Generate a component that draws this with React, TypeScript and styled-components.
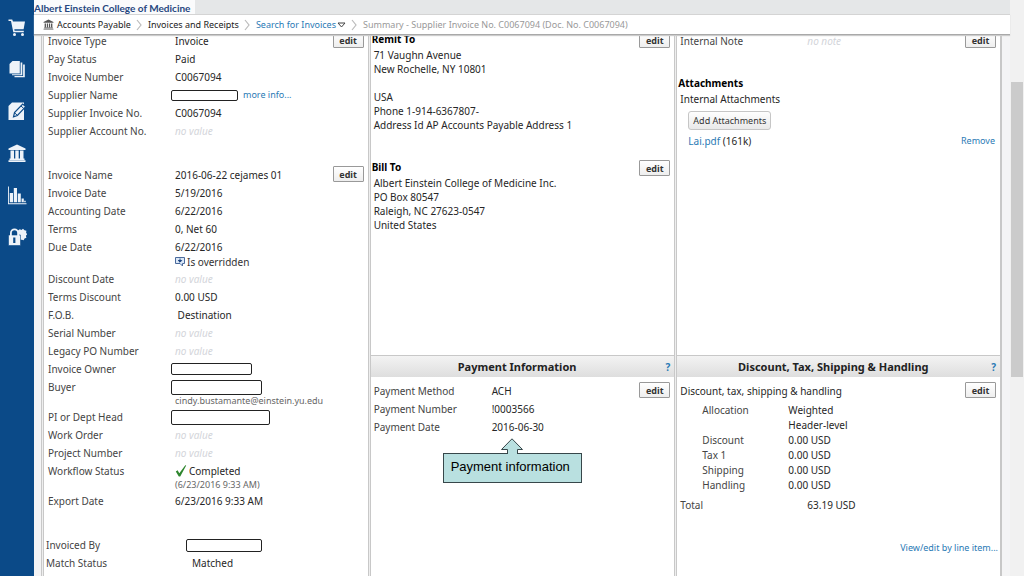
import React from 'react';
import styled, { createGlobalStyle } from 'styled-components';

const GlobalStyle = createGlobalStyle`
  * { box-sizing: border-box; }
  body { margin: 0; background: #fff; font: 10px/14px "Noto Sans", "Open Sans", sans-serif; color: #262626; }
  a { color: #2a7ab5; text-decoration: none; }
  h2, h3, dl, dd, dt, p, ul { margin: 0; padding: 0; font-weight: normal; }
  button { font-family: inherit; cursor: pointer; }
`;

const Page = styled.div`
  display: flex;
  height: 100vh;
  overflow: hidden;
`;

const Sidebar = styled.nav`
  flex: 0 0 34px;
  display: flex;
  flex-direction: column;
  align-items: center;
  gap: 22px;
  padding-top: 17px;
  background: #0b4a88;
`;

const NavLink = styled.a`
  display: block;
  height: 20px;
  svg { display: block; }
`;

const Main = styled.main`
  flex: 1;
  min-width: 0;
  display: flex;
  flex-direction: column;
`;

const TopBar = styled.header`
  flex: none;
  height: 14px;
  background: #e5e7e8;
`;

const Brand = styled.div`
  width: 161px;
  height: 14px;
  line-height: 16px;
  background: #fafbfc;
  color: #27477f;
  font-family: Lato, "Liberation Sans", sans-serif;
  font-size: 10px;
  font-weight: 700;
  white-space: nowrap;
`;

const Crumbs = styled.nav`
  position: relative;
  z-index: 1;
  flex: none;
  display: flex;
  align-items: center;
  height: 21px;
  padding-left: 9px;
  background: #fff;
  border-top: 1px solid #d4d4d4;
  border-bottom: 1px solid #a9a9a9;
  box-shadow: 0 1px 1px #ccc;
  font-size: 9px;
  white-space: nowrap;
  svg { flex: none; }
`;

const Crumb = styled.a<{ $tone?: string }>`
  color: ${p => p.$tone || '#222'};
`;

const CrumbIcon = styled.svg`
  margin-right: 3px;
`;

const Body = styled.div`
  flex: 1;
  min-height: 0;
  margin-top: -3px;
  padding: 0 8px 0 7px;
  background: #f4f4f5;
  overflow: hidden;
`;

const Board = styled.div`
  display: grid;
  grid-template-columns: 327fr 307fr 326fr;
  grid-template-rows: 324px 260px;
  column-gap: 1px;
  background: #eee;
  border: solid #c8c8c8;
  border-width: 0 1px;
  padding-left: 1px;
`;

const Panel = styled.section<{ $tall?: boolean }>`
  position: relative;
  grid-row: ${p => (p.$tall ? 'span 2' : 'auto')};
  min-width: 0;
  background: #fff;
  border: solid #c8c8c8;
  border-width: 0 1px 1px;
`;

const Block = styled.div<{ $h?: number; $pad?: string }>`
  display: flex;
  justify-content: space-between;
  align-items: flex-start;
  min-height: ${p => p.$h || 0}px;
  padding: ${p => p.$pad || '0 4px 0 3px'};
`;

const Fields = styled.dl<{ $indent?: number }>`
  flex: 1;
  min-width: 0;
  padding-left: ${p => p.$indent || 0}px;
`;

const Allocations = styled(Fields)`
  padding-top: 5px;
  padding-bottom: 3px;
`;

const Field = styled.div<{ $label: number; $dense?: boolean }>`
  display: grid;
  grid-template-columns: ${p => p.$label}px 1fr;
  padding: ${p => (p.$dense ? 0 : 1)}px 0;
  line-height: ${p => (p.$dense ? 15 : 16)}px;
  dt { color: #444; }
  dd { white-space: nowrap; }
`;

const Empty = styled.i`
  color: #d3d5da;
`;

const SubLine = styled.span<{ $muted?: boolean }>`
  display: flex;
  align-items: center;
  gap: 2px;
  height: ${p => (p.$muted ? 12 : 14)}px;
  line-height: ${p => (p.$muted ? 12 : 14)}px;
  font-size: ${p => (p.$muted ? 9 : 10)}px;
  color: ${p => (p.$muted ? '#666' : '#333')};
`;

const Line = styled.span`
  display: flex;
  align-items: center;
  height: 16px;
`;

const Redacted = styled.span<{ $w: number; $h: number }>`
  width: ${p => p.$w}px;
  height: ${p => p.$h}px;
  margin: 0 5px 0 -4px;
  background: #fff;
  border: 1px solid #222;
  border-radius: 2px;
`;

const EditButton = styled.button`
  flex: none;
  width: 31px;
  height: 16px;
  padding: 0;
  border: 1px solid #999;
  border-radius: 1px;
  background: linear-gradient(#fff, #eee);
  color: #333;
  font-size: 9px;
  font-weight: 700;
  line-height: 13px;
`;

const AddButton = styled.button`
  display: block;
  height: 19px;
  margin: 5px 0 4px 8px;
  padding: 0 4px;
  border: 1px solid #c6c6c6;
  border-radius: 3px;
  background: linear-gradient(#fefefe, #e9e9e9);
  color: #333;
  font-size: 9px;
`;

const Heading = styled.h3`
  margin-left: -2px;
  color: #000;
  font-size: 10px;
  font-weight: 700;
`;

const Address = styled.p`
  padding-top: 2px;
  white-space: pre-line;
`;

const PanelHead = styled.div`
  display: flex;
  align-items: center;
  height: 21px;
  padding: 0 4px;
  background: linear-gradient(#f3f3f3, #dedede);
  h2 { flex: 1; padding-right: 6px; text-align: center; font-size: 11px; font-weight: 700; color: #222; }
  a { font-weight: 700; }
`;

const FileRow = styled.div`
  display: flex;
  justify-content: space-between;
  padding: 0 1px 0 8px;
`;

const SmallLink = styled.a`
  font-size: 9px;
`;

const LineItemLink = styled.div`
  padding: 26px 2px 0 0;
  text-align: right;
`;

const Callout = styled.div`
  position: absolute;
  top: 82px;
  left: 72px;
  width: 139px;
  svg { display: block; margin: 0 0 -1px 57px; position: relative; }
`;

const CalloutText = styled.div`
  height: 30px;
  padding: 0 7px;
  border: 1px solid #37474a;
  background: #b9e0e0;
  color: #000;
  font: 13px/25px "Liberation Sans", Arial, sans-serif;
  white-space: nowrap;
`;

const ScrollTrack = styled.div`
  flex: 0 0 14px;
  padding: 82px 1px 0;
  background: #f1f1f1;
`;

const ScrollThumb = styled.div`
  height: 295px;
  background: #cbcbcb;
`;

const BankShape = () => (
  <path d="M10 1 19 5.5V7H1V5.5Z M3 8h2.4v7H3z M7 8h2.2v7H7z M10.8 8H13v7h-2.2z M14.6 8H17v7h-2.4z M2 15.6h16V17H2z M1 17.5h18V19H1z" />
);

const Glyph = ({ children }: { children: React.ReactNode }) => (
  <svg width="20" height="20" viewBox="0 0 20 20" fill="#eef3f9" aria-hidden="true">{children}</svg>
);

const navItems: { label: string; icon: React.ReactNode }[] = [
  { label: 'Shop', icon: <><path d="M1.500 2.500h3.700l.8 2H18l-1.400 7.800H7.300l.3 1.500h9.200v1.400H6.300L4 4H1.500z" /><circle cx="7.500" cy="17.400" r="1.500" /><circle cx="15.500" cy="17.400" r="1.500" /></> },
  { label: 'Orders', icon: <><path d="M2.500 5 5.500 2h7.300v12.500H2.500z" /><path d="M13.600 3.500h1.700v12.800H5v-1.100h8.600z" /><path d="M16.100 5.500h1.700V18.300H7.500v-1.200h8.600z" /></> },
  { label: 'Contracts', icon: <><path d="M1.500 5 5 1.500h12V19H1.500z" /><path d="m6.500 15.800 1-4.300L15.700 3l3 2.600-8.300 8.900z" fill="#eef3f9" stroke="#0b4a88" strokeWidth="1.200" /><path d="m14 5 2.800 2.500M7.800 12l2.400 2.200" stroke="#0b4a88" fill="none" /></> },
  { label: 'Accounts Payable', icon: <path d="M10 1.500 18.500 5.500V7H1.500V5.500Z M3.500 7.500H7V15.500H3.500z M8.300 7.500h3.400v8H8.300z M13 7.500h3.500v8H13z M2.500 15.500h15v1.500h-15z M1.500 17.300h17V19h-17z" /> },
  { label: 'Reports', icon: <path d="M1 1.500h.9v16.800h17.600v.9H1z M2.800 8H6v9.200H2.800z M6.800 3H10v14.200H6.800z M10.800 8.500h3v8.700h-3z M14.600 13.500h2.200v3.700h-2.200z M17.200 15.800h1.500v1.400h-1.500z" /> },
  { label: 'Administration', icon: <><path d="m11 3.500 1.800-1.200 1.700.6 1.500-1.100 1.500 1.500 1.900.4-.3 2 1.100 1.500-1.300 1.500.5 2-1.900.7-.8 1.800-2-.4H11z" /><path d="M1.500 8H13.500V18.500H1.500z" stroke="#0b4a88" strokeWidth=".6" /><path d="M3.900 9V6a3.600 3.600 0 0 1 7.200 0v3" fill="none" stroke="#eef3f9" strokeWidth="1.800" /><path d="M6.200 10.500h2.200v5.500H6.200z" fill="#0b4a88" /></> },
];

const Chevron = () => (
  <svg width="17" height="12" viewBox="0 0 17 12" aria-hidden="true"><path d="m6 1 4 5-4 5" fill="none" stroke="#bbb" strokeWidth="1.200" /></svg>
);

const noValue = <Empty>no value</Empty>;

const Row = ({ label, children, w = 127, dense }: { label: string; children: React.ReactNode; w?: number; dense?: boolean }) => (
  <Field $label={w} $dense={dense}><dt>{label}</dt><dd>{children}</dd></Field>
);

export default function App() {
  return (
    <Page>
      <GlobalStyle />
      <Sidebar aria-label="Main">
        {navItems.map(n => (
          <NavLink key={n.label} href="#" aria-label={n.label}><Glyph>{n.icon}</Glyph></NavLink>
        ))}
      </Sidebar>
      <Main>
        <TopBar><Brand>Albert Einstein College of Medicine</Brand></TopBar>
        <Crumbs aria-label="Breadcrumb">
          <CrumbIcon width="11" height="11" viewBox="0 0 20 20" fill="#555" aria-hidden="true"><BankShape /></CrumbIcon>
          <Crumb href="#">Accounts Payable</Crumb>
          <Chevron />
          <Crumb href="#">Invoices and Receipts</Crumb>
          <Chevron />
          <Crumb href="#" $tone="#2a7ab5">Search for Invoices</Crumb>
          <svg width="10" height="8" viewBox="0 0 10 8" aria-hidden="true"><path d="M2 2h7L5.500 6z" fill="#fff" stroke="#444" /></svg>
          <Chevron />
          <Crumb as="span" $tone="#999">Summary - Supplier Invoice No. C0067094 (Doc. No. C0067094)</Crumb>
        </Crumbs>
        <Body>
          <Board>
            <Panel $tall>
              <Block $h={134} $pad="0 4px">
                <Fields>
                  <Row label="Invoice Type">Invoice</Row>
                  <Row label="Pay Status">Paid</Row>
                  <Row label="Invoice Number">C0067094</Row>
                  <Row label="Supplier Name"><Line><Redacted $w={67} $h={11} /><SmallLink href="#">more info...</SmallLink></Line></Row>
                  <Row label="Supplier Invoice No.">C0067094</Row>
                  <Row label="Supplier Account No.">{noValue}</Row>
                </Fields>
                <EditButton>edit</EditButton>
              </Block>
              <Block $h={370} $pad="0 4px">
                <Fields>
                  <Row label="Invoice Name">2016-06-22 cejames 01</Row>
                  <Row label="Invoice Date">5/19/2016</Row>
                  <Row label="Accounting Date">6/22/2016</Row>
                  <Row label="Terms">0, Net 60</Row>
                  <Row label="Due Date">
                    6/22/2016
                    <SubLine>
                      <svg width="10" height="10" viewBox="0 0 10 10" aria-hidden="true"><path d="M.5.5h9v6h-2v2.500L5 6.500H.5z" fill="#dbe8f7" stroke="#4a6a9c" /><path d="M5 1.500v3M3.300 3.500 5 5.200l1.700-1.700z" fill="#1d4480" stroke="#1d4480" /></svg>
                      Is overridden
                    </SubLine>
                  </Row>
                  <Row label="Discount Date">{noValue}</Row>
                  <Row label="Terms Discount">0.00 USD</Row>
                  <Row label="F.O.B.">&nbsp;Destination</Row>
                  <Row label="Serial Number">{noValue}</Row>
                  <Row label="Legacy PO Number">{noValue}</Row>
                  <Row label="Invoice Owner"><Line><Redacted $w={81} $h={12} /></Line></Row>
                  <Row label="Buyer"><Line><Redacted $w={91} $h={15} /></Line><SubLine $muted>cindy.bustamante@einstein.yu.edu</SubLine></Row>
                  <Row label="PI or Dept Head"><Line><Redacted $w={99} $h={15} /></Line></Row>
                  <Row label="Work Order">{noValue}</Row>
                  <Row label="Project Number">{noValue}</Row>
                  <Row label="Workflow Status">
                    <Line>
                      <svg width="14" height="12" viewBox="0 0 14 12" aria-hidden="true"><path d="M.8 6.500 2.600 5.200 4.300 8.200 10.300.3l.9.3L5.200 11.500H3.800z" fill="#2e862e" /></svg>
                      Completed
                    </Line>
                    <SubLine $muted>(6/23/2016 9:33 AM)</SubLine>
                  </Row>
                  <Row label="Export Date">6/23/2016 9:33 AM</Row>
                </Fields>
                <EditButton>edit</EditButton>
              </Block>
              <Block $pad="0 4px 0 2px">
                <Fields>
                  <Row label="Invoiced By" w={144}><Line><Redacted $w={76} $h={13} /></Line></Row>
                  <Row label="Match Status" w={146}>Matched</Row>
                </Fields>
              </Block>
            </Panel>

            <Panel>
              <Block $h={128}>
                <div>
                  <Heading>Remit To</Heading>
                  <Address>{'71 Vaughn Avenue\nNew Rochelle, NY 10801\n\nUSA\nPhone 1-914-6367807-\nAddress Id AP Accounts Payable Address 1'}</Address>
                </div>
                <EditButton>edit</EditButton>
              </Block>
              <Block>
                <div>
                  <Heading>Bill To</Heading>
                  <Address>{'Albert Einstein College of Medicine Inc.\nPO Box 80547\nRaleigh, NC 27623-0547\nUnited States'}</Address>
                </div>
                <EditButton>edit</EditButton>
              </Block>
            </Panel>

            <Panel>
              <Block $h={44}>
                <Fields><Row label="Internal Note"><Empty>no note</Empty></Row></Fields>
                <EditButton>edit</EditButton>
              </Block>
              <Block>
                <Fields>
                  <Heading>Attachments</Heading>
                  <Address>Internal Attachments</Address>
                  <AddButton>Add Attachments</AddButton>
                  <FileRow>
                    <span><a href="#">Lai.pdf</a> (161k)</span>
                    <SmallLink href="#">Remove</SmallLink>
                  </FileRow>
                </Fields>
              </Block>
            </Panel>

            <Panel>
              <PanelHead><h2>Payment Information</h2><a href="#">?</a></PanelHead>
              <Block $pad="5px 4px 0 3px">
                <Fields>
                  <Row label="Payment Method" w={118}>ACH</Row>
                  <Row label="Payment Number" w={118}>!0003566</Row>
                  <Row label="Payment Date" w={118}>2016-06-30</Row>
                </Fields>
                <EditButton>edit</EditButton>
              </Block>
              <Callout>
                <svg width="24" height="16" viewBox="0 0 24 16" aria-hidden="true"><path d="M7.500 16v-4.500H1.500L12 .8l10.500 10.700h-5V16" fill="#b9e0e0" stroke="#37474a" /></svg>
                <CalloutText>Payment information</CalloutText>
              </Callout>
            </Panel>

            <Panel>
              <PanelHead><h2>Discount, Tax, Shipping &amp; Handling</h2><a href="#">?</a></PanelHead>
              <Block $pad="5px 4px 0 3px">
                <div>
                  <Address>Discount, tax, shipping &amp; handling</Address>
                  <Allocations $indent={22}>
                    <Row label="Allocation" w={86} dense>Weighted<br />Header-level</Row>
                    <Row label="Discount" w={86} dense>0.00 USD</Row>
                    <Row label="Tax 1" w={86} dense>0.00 USD</Row>
                    <Row label="Shipping" w={86} dense>0.00 USD</Row>
                    <Row label="Handling" w={86} dense>0.00 USD</Row>
                  </Allocations>
                  <Fields><Row label="Total">63.19 USD</Row></Fields>
                </div>
                <EditButton>edit</EditButton>
              </Block>
              <LineItemLink><SmallLink href="#">View/edit by line item...</SmallLink></LineItemLink>
            </Panel>
          </Board>
        </Body>
      </Main>
      <ScrollTrack><ScrollThumb /></ScrollTrack>
    </Page>
  );
}
